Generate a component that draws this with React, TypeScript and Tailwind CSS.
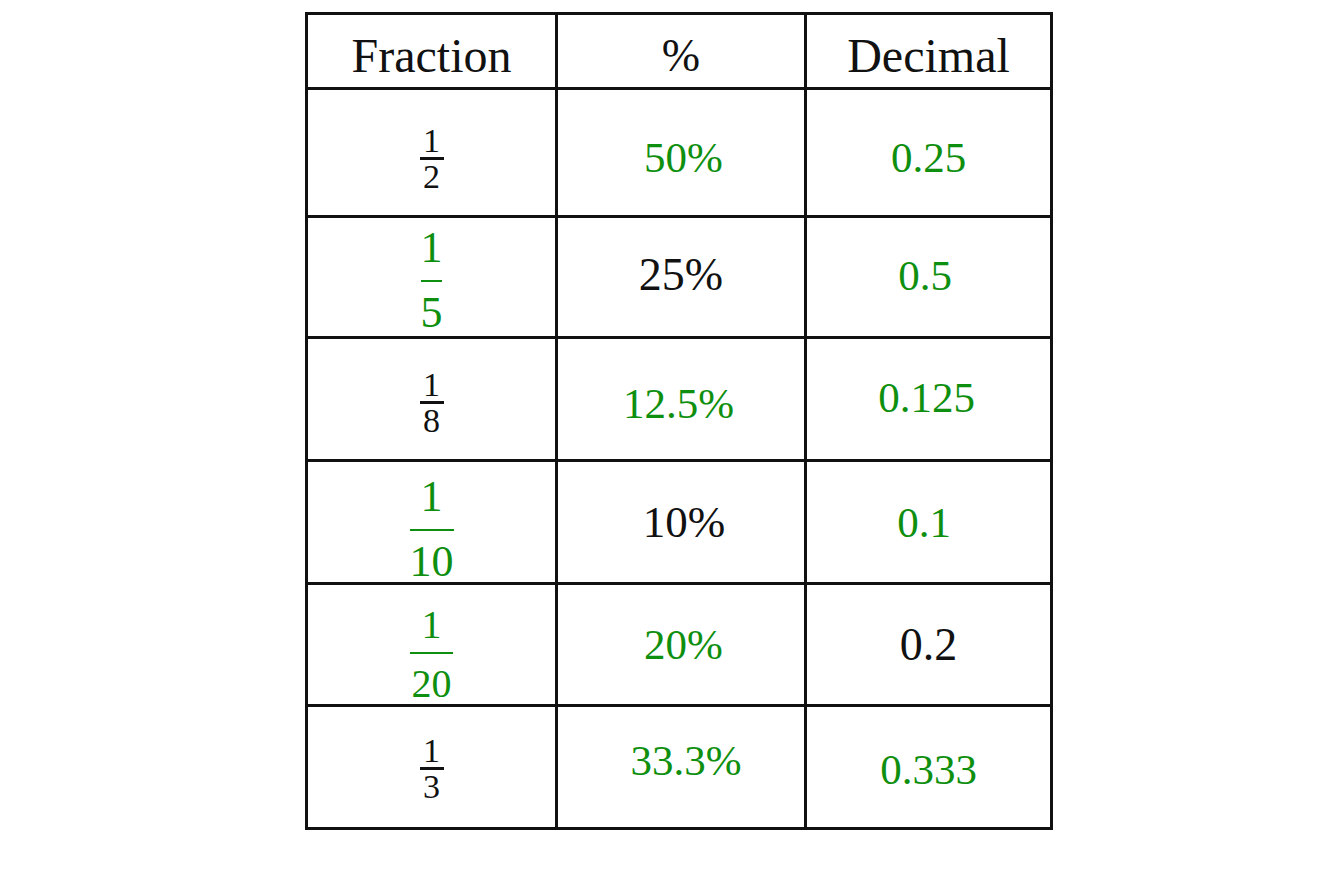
const GREEN = 'text-[#0f8f0f]';

type FracProps = {
  num: string;
  den: string;
  size: string;
  bar: string;
  denGap: string;
  tone: string;
  shift: string;
};

const Frac = ({ num, den, size, bar, denGap, tone, shift }: FracProps) => (
  <div className={`flex flex-col items-center leading-none ${size} ${tone} ${shift}`}>
    <span>{num}</span>
    <div className={`bg-current ${bar}`} />
    <span className={denGap}>{den}</span>
  </div>
);

const Cell = ({ children }: { children: React.ReactNode }) => (
  <div className="border-r-[3px] border-b-[3px] border-[#111] flex items-center justify-center overflow-visible">
    {children}
  </div>
);

const App = () => {
  return (
    <div
      className="min-h-screen bg-white pt-[12px] pl-[305px] text-[#111]"
      style={{ fontFamily: '"Liberation Serif", "Times New Roman", serif' }}
    >
      <div className="w-[748px] grid grid-cols-[250px_249px_246px] grid-rows-[75px_128px_121px_123px_123px_122px_123px] border-l-[3px] border-t-[3px] border-[#111]">
        {/* header */}
        <Cell>
          <span className="text-[48px] leading-none mt-[10px]">Fraction</span>
        </Cell>
        <Cell>
          <span className="text-[46px] leading-none mt-[10px]">%</span>
        </Cell>
        <Cell>
          <span className="text-[48px] leading-none mt-[10px]">Decimal</span>
        </Cell>

        {/* 1/2 */}
        <Cell>
          <Frac num="1" den="2" size="text-[34px]" tone="text-[#111]" bar="mt-[-1px] h-[3px] w-[24px]" denGap="mt-0" shift="mt-[13px]" />
        </Cell>
        <Cell>
          <span className={`text-[43px] leading-none mt-[10px] ml-[5px] ${GREEN}`}>50%</span>
        </Cell>
        <Cell>
          <span className={`text-[43px] leading-none mt-[10px] ${GREEN}`}>0.25</span>
        </Cell>

        {/* 1/5 */}
        <Cell>
          <Frac num="1" den="5" size="text-[44px]" tone={GREEN} bar="mt-[10px] h-[2px] w-[21px]" denGap="mt-[9px]" shift="mt-[7px]" />
        </Cell>
        <Cell>
          <span className="text-[46px] leading-none mb-[5px]">25%</span>
        </Cell>
        <Cell>
          <span className={`text-[43px] leading-none mb-[4px] mr-[7px] ${GREEN}`}>0.5</span>
        </Cell>

        {/* 1/8 */}
        <Cell>
          <Frac num="1" den="8" size="text-[34px]" tone="text-[#111]" bar="mt-[-1px] h-[3px] w-[24px]" denGap="mt-0" shift="mt-[7px]" />
        </Cell>
        <Cell>
          <span className={`text-[43px] leading-none mt-[8px] mr-[5px] ${GREEN}`}>12.5%</span>
        </Cell>
        <Cell>
          <span className={`text-[43px] leading-none mb-[4px] mr-[4px] ${GREEN}`}>0.125</span>
        </Cell>

        {/* 1/10 */}
        <Cell>
          <Frac num="1" den="10" size="text-[44px]" tone={GREEN} bar="mt-[10px] h-[2px] w-[44px]" denGap="mt-[9px]" shift="mt-[15px]" />
        </Cell>
        <Cell>
          <span className="text-[45px] leading-none ml-[6px]">10%</span>
        </Cell>
        <Cell>
          <span className={`text-[43px] leading-none mr-[9px] ${GREEN}`}>0.1</span>
        </Cell>

        {/* 1/20 */}
        <Cell>
          <Frac num="1" den="20" size="text-[40px]" tone={GREEN} bar="mt-[7px] h-[2px] w-[43px]" denGap="mt-[10px]" shift="mt-[20px]" />
        </Cell>
        <Cell>
          <span className={`text-[43px] leading-none ml-[5px] ${GREEN}`}>20%</span>
        </Cell>
        <Cell>
          <span className="text-[46px] leading-none">0.2</span>
        </Cell>

        {/* 1/3 */}
        <Cell>
          <Frac num="1" den="3" size="text-[34px]" tone="text-[#111]" bar="mt-[-1px] h-[3px] w-[24px]" denGap="mt-0" shift="mt-[4px]" />
        </Cell>
        <Cell>
          <span className={`text-[43px] leading-none mb-[13px] ml-[10px] ${GREEN}`}>33.3%</span>
        </Cell>
        <Cell>
          <span className={`text-[43px] leading-none mt-[4px] ${GREEN}`}>0.333</span>
        </Cell>
      </div>
    </div>
  );
};

export default App;
